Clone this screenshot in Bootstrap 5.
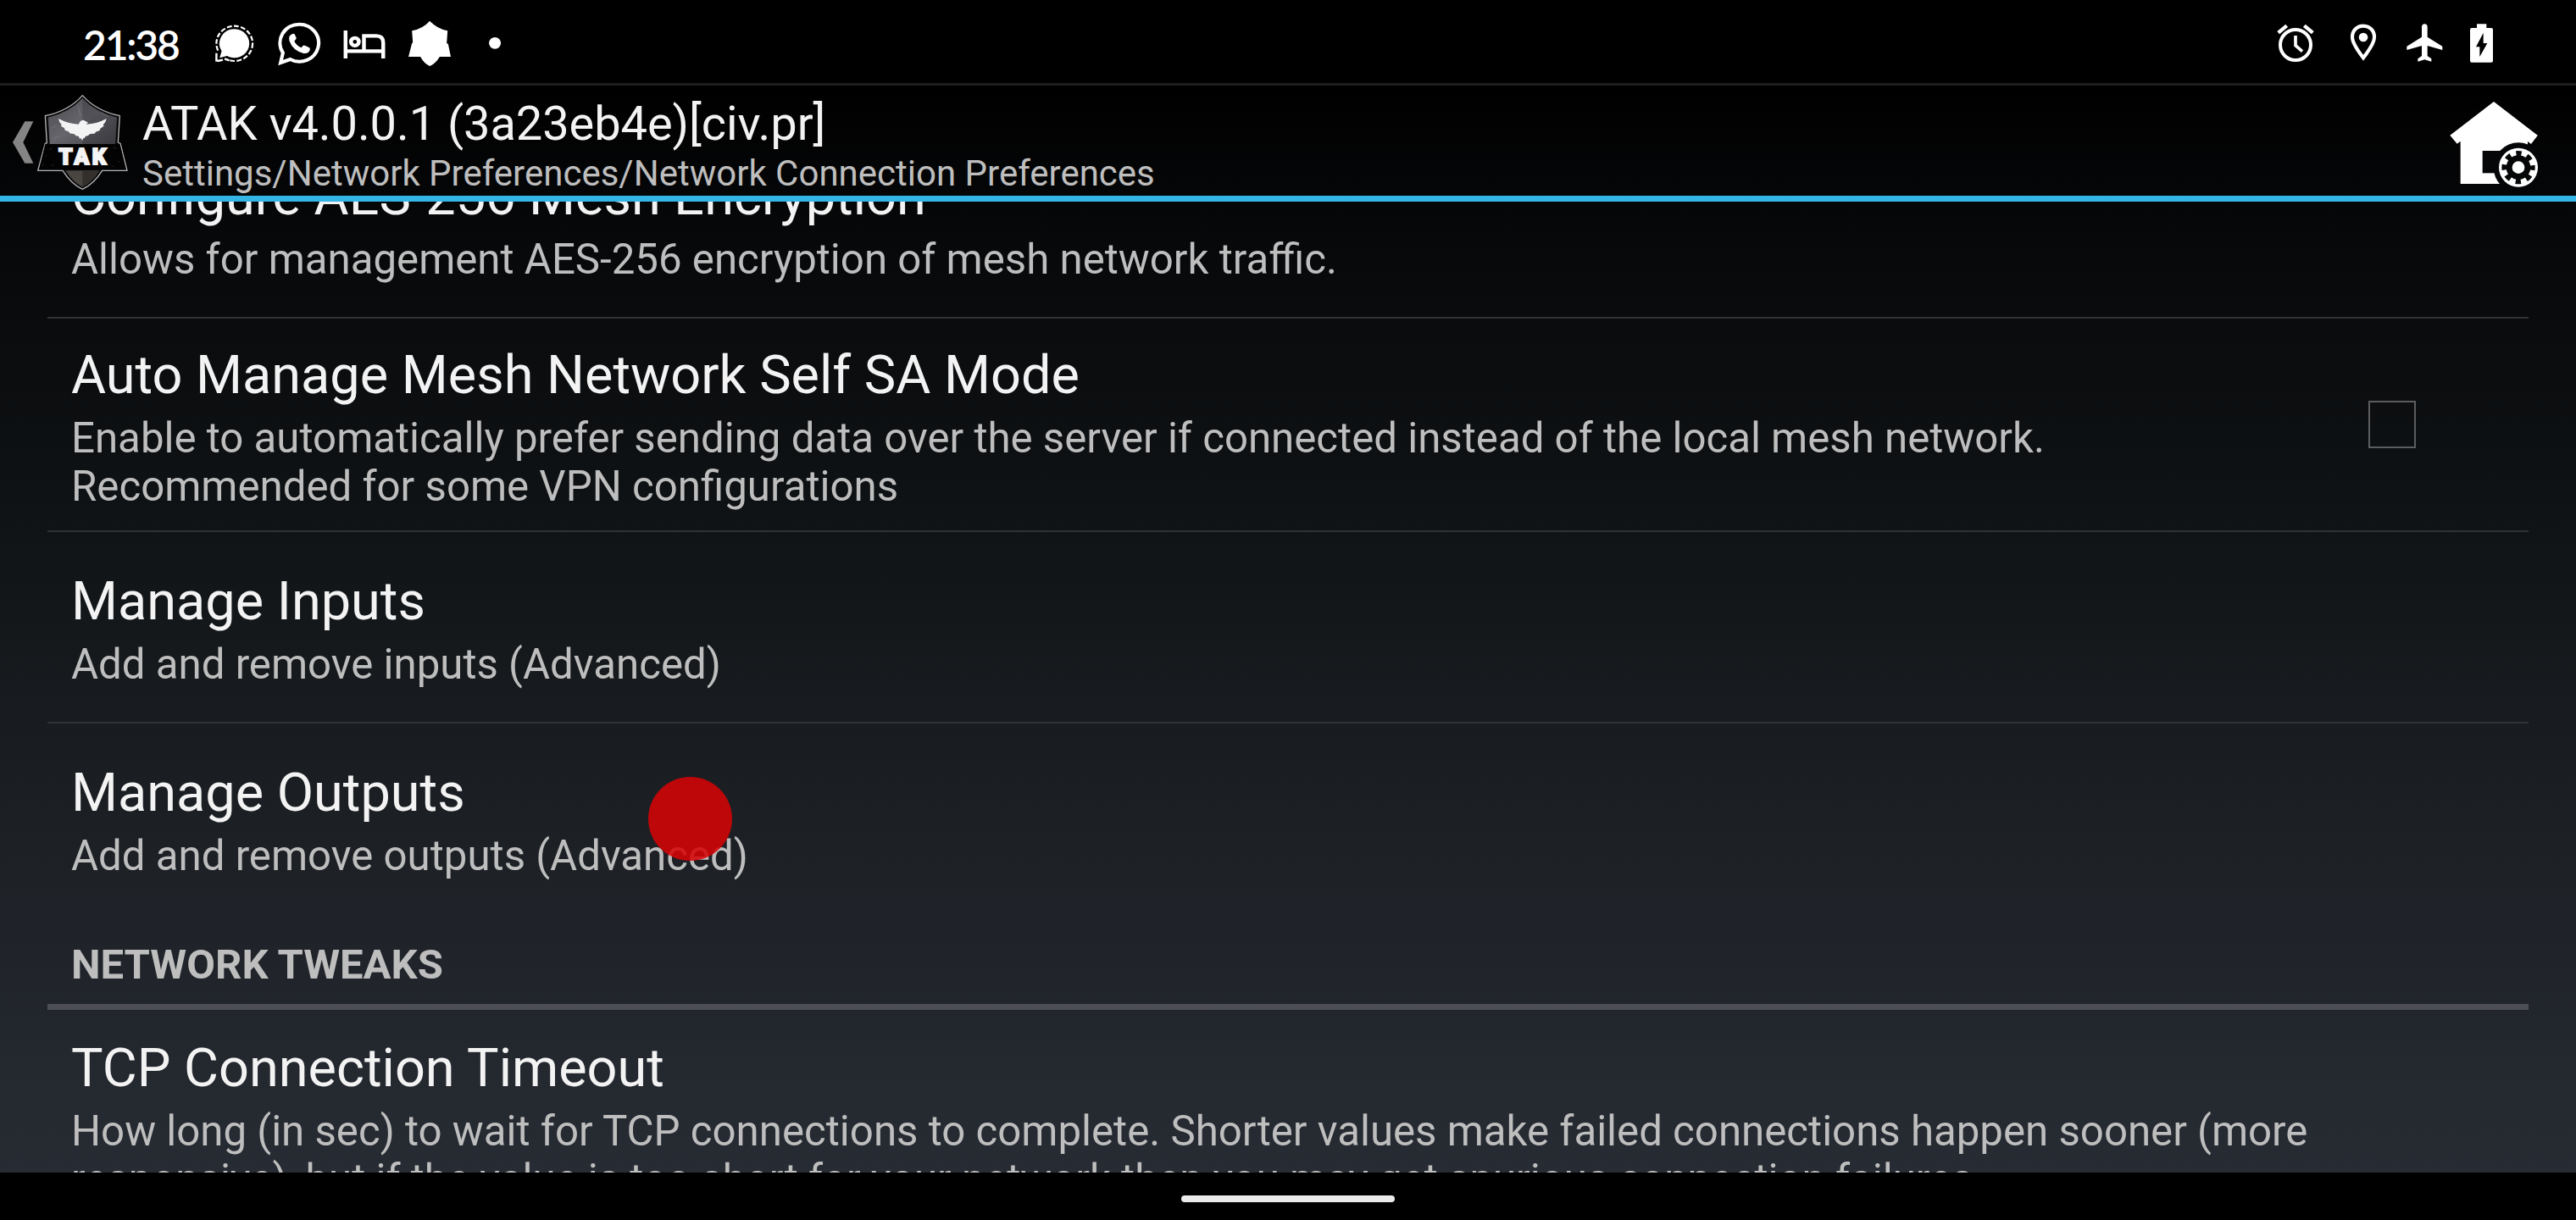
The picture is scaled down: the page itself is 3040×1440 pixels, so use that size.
<!DOCTYPE html>
<html lang="en">
<head>
<meta charset="utf-8">
<meta name="viewport" content="width=device-width, initial-scale=1">
<title>ATAK Network Connection Preferences</title>
<link href="https://cdn.jsdelivr.net/npm/bootstrap@5.3.0/dist/css/bootstrap.min.css" rel="stylesheet">
<style>
  body { background:#000; color:#f3f3f3; font-family:Roboto,"Noto Sans",sans-serif; font-size:49px; line-height:57px; width:3040px; height:1440px; }
  svg { display:block; flex-shrink:0; }
  .status-bar { height:98px; padding:24px 97px 0 98px; }
  .clock { font-family:Lato,Roboto,sans-serif; font-weight:600; font-size:48px; line-height:58px; letter-spacing:-2.2px; width:155px; color:#fff; white-space:nowrap; }
  .app-shell { height:1286px; background:linear-gradient(#000 0%,#07080a 14%,#0f1214 38%,#1b1f23 65%,#272b33 100%); }
  .title-bar { height:140px; border-top:3px solid #1e1e1e; border-bottom:7px solid #33b5e5; padding-left:14px; padding-right:43px; }
  .back-arrow { margin-top:41px; }
  .logo { margin:9px 0 0 2px; }
  .house { margin-top:17px; }
  .titles { margin-left:16px; padding-top:12px; }
  .app-title { font-size:56px; line-height:66px; letter-spacing:-.08px; }
  .crumbs { font-size:42px; line-height:49px; color:#bebebe; padding-top:1px; }
  .pref-pane { padding:0 56px; }
  .pref { border-bottom:2px solid #303335; padding:45px 28px 0; }
  .pref-title { font-size:63px; line-height:74px; margin-bottom:9px; white-space:nowrap; }
  .pref-note { font-size:49.190px; color:#bebebe; white-space:nowrap; }
  .p-std { height:226px; }
  .p-aes { height:181px; margin-top:-43px; padding-top:0; }
  .p-auto { height:252px; padding-top:30px; }
  .p-tcp { padding-top:32px; }
  .section-head { color:#bebebe; font-weight:700; height:112px; border-bottom:7px solid #4d4f55; padding:30px 28px 0; }
  .tick { width:56px; height:56px; border:2px solid #5b5d5f; margin:67px 105px 0 0; }
  .touch-dot { width:99px; height:99px; left:765px; top:917px; background:rgba(214,4,6,.87); }
  .nav-strip { height:56px; padding-top:27px; }
  .pill { width:252px; height:8px; background:#ebebeb; }
</style>
</head>
<body class="overflow-hidden position-relative">
<div class="status-bar d-flex align-items-start">
  <div class="clock flex-shrink-0">21:38</div>
  <svg width="47.500" height="54" viewBox="501 42 138 162" preserveAspectRatio="none">
    <circle cx="570" cy="124" r="62" fill="none" stroke="#fff" stroke-width="6.500" stroke-dasharray="17 7"/>
    <path d="M501 150h32l14 30-10 24h-36z" fill="#000"/>
    <path d="M508 158v27h8M512 186l18-4M536 178q8 3 16 6" fill="none" stroke="#fff" stroke-width="7"/>
    <path d="M570 73a51 51 0 1 1-26 95l-25 7 7-24a51 51 0 0 1 44-78z" fill="#fff"/>
  </svg>
  <svg width="52.700" height="54" viewBox="717 42 153 162" preserveAspectRatio="none" style="margin-left:26.500px">
    <path d="M794 56a66 66 0 1 1-32 124l-33 12 8-35a66 66 0 0 1 57-101z" fill="none" stroke="#fff" stroke-width="12"/>
    <path d="M770 90q-16 6-11 25 12 35 49 44 19 2 22-14 1-6-5-8l-13-6q-4-2-7 2l-5 6q-16-7-24-23l6-8q2-3 0-6l-5-11q-3-3-7-1z" fill="#fff"/>
  </svg>
  <svg width="51.700" height="54" viewBox="942 42 150 162" preserveAspectRatio="none" style="margin-left:24.800px">
    <path d="M953 78v99M1082 177v-56q0-24-24-24h-42v54M953 151h129" fill="none" stroke="#fff" stroke-width="13"/>
    <circle cx="985" cy="118" r="13.500" fill="none" stroke="#fff" stroke-width="13"/>
  </svg>
  <svg width="51.700" height="54" viewBox="1164 42 150 162" preserveAspectRatio="none" style="margin-left:24.800px">
    <path d="M1240 44q24 28 61 35l-3 44 5 3 9 45h-38q-15 25-34 33-19-8-32-33h-41l12-48 3-2-3-42q38-8 61-35z" fill="#fff"/>
  </svg>
  <svg width="16.500" height="54" viewBox="1440 42 48 162" preserveAspectRatio="none" style="margin-left:43.400px"><circle cx="1463.500" cy="122.500" r="20.500" fill="#fff"/></svg>
  <svg class="ms-auto" width="46" height="54" viewBox="78 42 138 162">
    <circle cx="147" cy="129" r="54" fill="none" stroke="#fff" stroke-width="12"/>
    <path d="M147 96v35l24 21" fill="none" stroke="#fff" stroke-width="11"/>
    <path d="M86 86l30-25M178 61l30 25" stroke="#fff" stroke-width="13"/>
  </svg>
  <svg width="34" height="54" viewBox="336 42 102 162" style="margin-left:40px">
    <path d="M387 62q17 0 28 11t11 29q0 22-39 73-39-51-39-73 0-18 11-29t28-11z" fill="none" stroke="#fff" stroke-width="12.500"/>
    <circle cx="387" cy="102" r="16" fill="#fff"/>
  </svg>
  <svg width="44" height="54" viewBox="537 42 132 162" style="margin-left:33px">
    <path d="M604 55q10 0 10 11v35l53 33v13l-53-15v36l14 10v10l-24-7-24 7v-10l14-10v-36l-53 15v-13l53-33V66q0-11 10-11z" fill="#fff"/>
  </svg>
  <svg width="29" height="54" viewBox="762 42 87 162" style="margin-left:31px">
    <path fill-rule="evenodd" d="M789 55h34v14h17q6 0 6 6v110q0 6-6 6h-69q-6 0-6-6V75q0-6 6-6h18zM812 86l-26 50h13v35l27-48h-14z" fill="#fff"/>
  </svg>
</div>
<div class="app-shell overflow-hidden d-flex flex-column">
  <header class="title-bar d-flex align-items-start flex-shrink-0">
    <svg class="back-arrow" width="27" height="52" viewBox="42 156 81 156"><path d="M88 160h30L82 234l36 74H88L45 234z" fill="#858585"/></svg>
    <svg class="logo" width="109" height="116" viewBox="129 60 327 348">
      <defs>
        <linearGradient id="steel" x1="0" y1="0" x2="1" y2="1"><stop offset="0" stop-color="#4a4a4e"/><stop offset=".5" stop-color="#66656c"/><stop offset="1" stop-color="#444246"/></linearGradient>
      </defs>
      <path d="M292 68q50 56 132 72l-6 94 8 4 24 96h-88q-30 48-70 66-40-18-70-66h-88l26-96 6-2-6-96q82-16 132-72z" fill="#0a0a0b" stroke="#b4b4b4" stroke-width="4" stroke-linejoin="round"/>
      <path d="M292 78q46 50 122 68l-6 94H176l-6-94q76-18 122-68z" fill="url(#steel)"/>
      <path d="M292 78q46 50 122 68l-6 94H292z" fill="#29292f" opacity=".3"/>
      <path d="M274 100l6 20 4 20M180 186l20-12M360 130l24 14M190 220l18-8" stroke="#85858b" stroke-width="1.500" fill="none"/>
      <path d="M232 334h120q-26 42-60 58-34-16-60-58z" fill="#494541"/>
      <path d="M292 334h60q-26 42-60 58z" fill="#332f2d"/>
      <path d="M160 240h264l22 90H139z" fill="#030303"/>
      <path d="M150 318l5-8M160 285l4-5M402 252l8 4M420 300l5 6M398 318l6 3M182 316l8-3M176 262l6-8" stroke="#3d3d40" stroke-width="2"/>
      <path d="M207 150q34 18 71 20l6-10q9-9 20 0l8 4-7 6q40-2 72-20-2 14-12 22l3 4-13 9-2 7-14 5-4 6-16 1-8 7-8 1-4 8-3-2-5 10-4-9-5 3-3-9-10-2-6-6-16-3-4-6-13-5-2-7-12-8 2-5q-10-10-11-21z" fill="#f3f3f3"/>
      <text x="208" y="312" font-family="Roboto,sans-serif" font-weight="900" font-size="78" fill="#f4f4f4" stroke="#f4f4f4" stroke-width="6" textLength="168" lengthAdjust="spacing">TAK</text>
    </svg>
    <div class="titles">
      <div class="app-title">ATAK v4.0.0.1 (3a23eb4e)[civ.pr]</div>
      <div class="crumbs">Settings/Network Preferences/Network Connection Preferences</div>
    </div>
    <svg class="house ms-auto" width="107" height="105" viewBox="90 55 321 315">
      <path d="M249 61l155 119-23 30-12-9v151H131V201l-12 9-25-30z" fill="#fff"/>
      <path d="M209 235h80v79h-80z" fill="#050607"/>
      <circle cx="336" cy="294" r="88" fill="#050607"/>
      <path d="M366 199l15 11 23-30-60-20v40z" fill="#fff"/>
      <circle cx="336" cy="294" r="69" fill="#fff"/>
      <circle cx="336" cy="294" r="43" fill="#050607"/>
      <circle cx="336" cy="294" r="50" fill="none" stroke="#050607" stroke-width="18" stroke-dasharray="19 20.270" stroke-dashoffset="9.500"/>
      <circle cx="336" cy="294" r="22" fill="#fff"/>
    </svg>
  </header>
  <main class="pref-pane overflow-hidden flex-grow-1">
    <div class="pref p-aes">
      <div class="pref-title">Configure AES-256 Mesh Encryption</div>
      <div class="pref-note">Allows for management AES-256 encryption of mesh network traffic.</div>
    </div>
    <div class="pref p-auto d-flex justify-content-between">
      <div>
        <div class="pref-title">Auto Manage Mesh Network Self SA Mode</div>
        <div class="pref-note">Enable to automatically prefer sending data over the server if connected instead of the local mesh network.<br>Recommended for some VPN configurations</div>
      </div>
      <div class="tick"></div>
    </div>
    <div class="pref p-std">
      <div class="pref-title">Manage Inputs</div>
      <div class="pref-note">Add and remove inputs (Advanced)</div>
    </div>
    <div class="pref p-std border-bottom-0">
      <div class="pref-title">Manage Outputs</div>
      <div class="pref-note">Add and remove outputs (Advanced)</div>
    </div>
    <div class="section-head">NETWORK TWEAKS</div>
    <div class="pref p-tcp border-bottom-0">
      <div class="pref-title">TCP Connection Timeout</div>
      <div class="pref-note">How long (in sec) to wait for TCP connections to complete. Shorter values make failed connections happen sooner (more<br>responsive), but if the value is too short for your network then you may get spurious connection failures.</div>
    </div>
  </main>
</div>
<div class="nav-strip d-flex justify-content-center"><div class="pill rounded-pill"></div></div>
<div class="touch-dot position-absolute rounded-circle"></div>
<script src="https://cdn.jsdelivr.net/npm/bootstrap@5.3.0/dist/js/bootstrap.bundle.min.js"></script>
</body>
</html>
